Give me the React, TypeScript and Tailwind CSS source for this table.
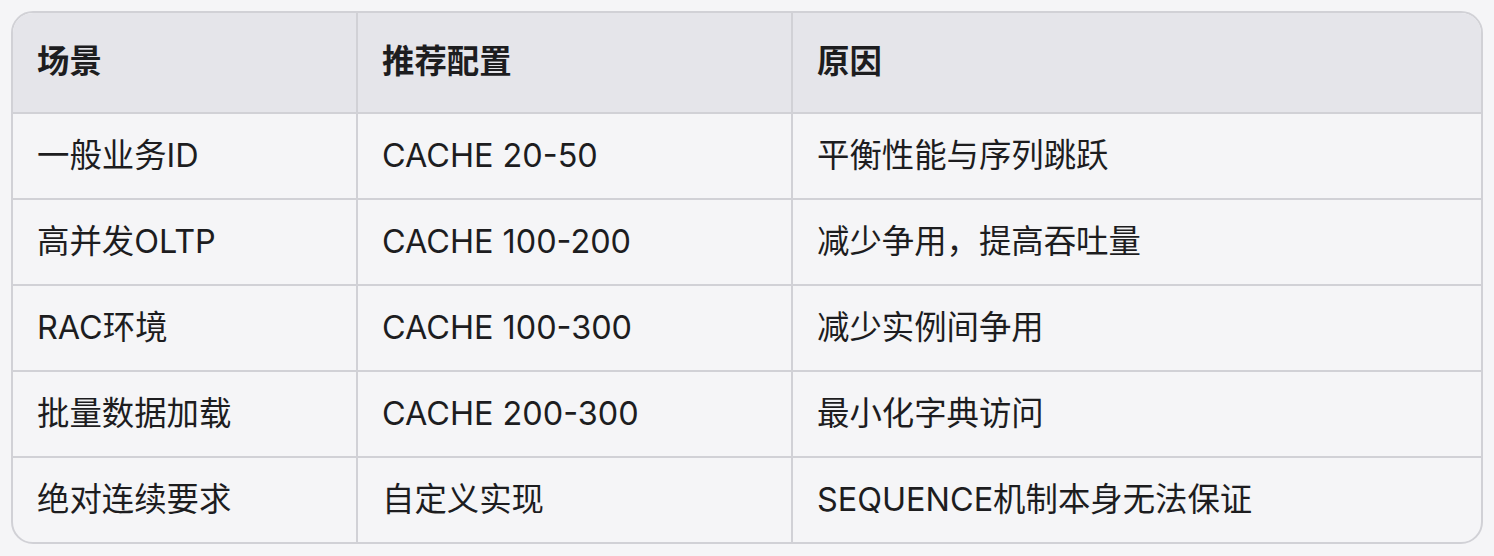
const HEADERS = ['场景', '推荐配置', '原因']

const ROWS = [
  ['一般业务ID', 'CACHE 20-50', '平衡性能与序列跳跃'],
  ['高并发OLTP', 'CACHE 100-200', '减少争用，提高吞吐量'],
  ['RAC环境', 'CACHE 100-300', '减少实例间争用'],
  ['批量数据加载', 'CACHE 200-300', '最小化字典访问'],
  ['绝对连续要求', '自定义实现', 'SEQUENCE机制本身无法保证'],
]

export default function App() {
  return (
    <div
      className="min-h-screen bg-[#f5f5f7] p-[11px] text-[#1d1d1f]"
      style={{ fontFamily: 'Inter, "Noto Sans CJK SC", sans-serif' }}
    >
      <div className="overflow-hidden rounded-[22px] border-2 border-[#d1d1d6] bg-[#f5f5f7]">
        {/* Header */}
        <div className="grid grid-cols-[343px_435px_1fr] border-b-2 border-[#d1d1d6] bg-[#e5e5ea]">
          {HEADERS.map((h, i) => (
            <div
              key={h}
              className={`flex h-[99px] items-center pl-6 text-[32.4px] font-bold ${i > 0 ? 'border-l-2 border-[#d1d1d6]' : ''}`}
            >
              {h}
            </div>
          ))}
        </div>

        {/* Body rows */}
        {ROWS.map((row, r) => (
          <div
            key={r}
            className={`grid grid-cols-[343px_435px_1fr] ${r < ROWS.length - 1 ? 'border-b-2 border-[#d1d1d6]' : ''}`}
          >
            {row.map((cell, i) => (
              <div
                key={i}
                className={`flex h-[84px] items-center pl-6 text-[32.4px] ${i > 0 ? 'border-l-2 border-[#d1d1d6]' : ''}`}
              >
                {cell}
              </div>
            ))}
          </div>
        ))}
      </div>
    </div>
  )
}
